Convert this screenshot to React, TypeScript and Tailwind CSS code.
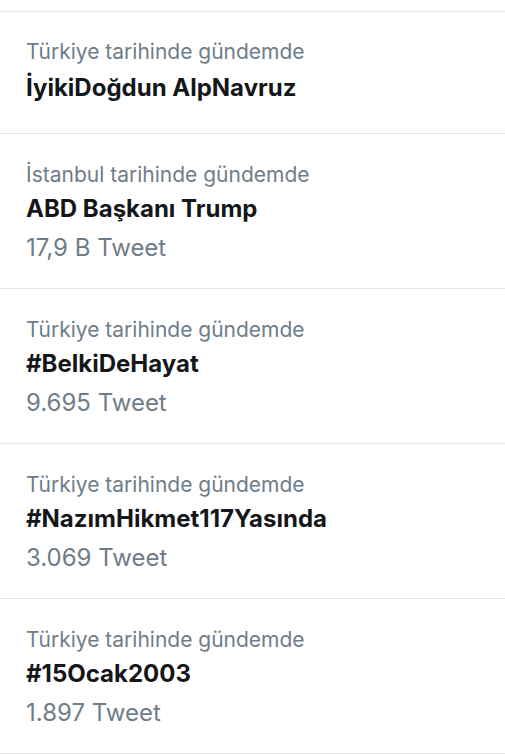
const trends = [
  { place: "Türkiye", title: "İyikiDoğdun AlpNavruz" },
  { place: "İstanbul", title: "ABD Başkanı Trump", count: "17,9 B Tweet" },
  { place: "Türkiye", title: "#BelkiDeHayat", count: "9.695 Tweet" },
  { place: "Türkiye", title: "#NazımHikmet117Yasında", count: "3.069 Tweet" },
  { place: "Türkiye", title: "#15Ocak2003", count: "1.897 Tweet" },
];

export default function App() {
  return (
    <div
      className="min-h-screen w-full bg-white pt-[11px]"
      style={{ fontFamily: "Inter, 'Liberation Sans', sans-serif" }}
    >
      {trends.map((t, i) => (
        <div
          key={i}
          className={`border-t border-[#e3e6e9] pl-[26px] ${t.count ? "pt-[25px] pb-[20px]" : "pt-[24px] pb-[25px]"}`}
        >
          <div className="text-[21px] leading-[31px] text-[#6f7d89]">
            {t.place} tarihinde gündemde
          </div>
          <div className={`text-[24px] font-bold text-[#14171a] ${t.count ? "leading-[38px]" : "leading-[41px]"}`}>
            {t.title}
          </div>
          {t.count && (
            <div className="text-[24px] leading-[40px] text-[#6f7d89]">{t.count}</div>
          )}
        </div>
      ))}
      <div className="border-t border-[#e3e6e9]" />
    </div>
  );
}
